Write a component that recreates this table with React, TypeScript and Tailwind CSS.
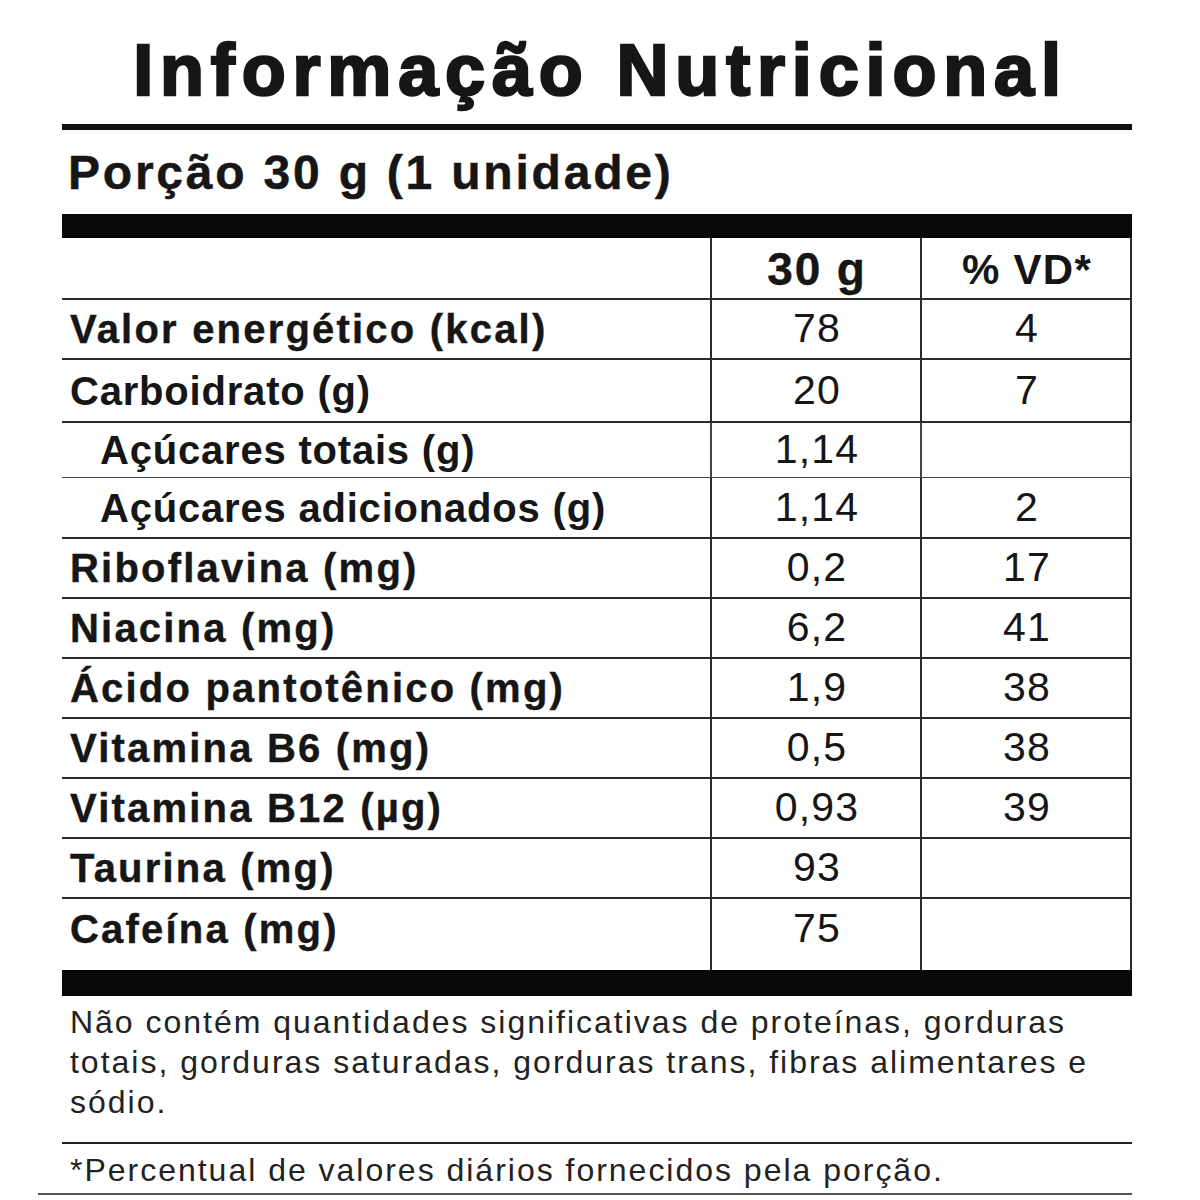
const ROWS = [
  { label: "Valor energético (kcal)", qty: "78", vd: "4", h: 60 },
  { label: "Carboidrato (g)", qty: "20", vd: "7", h: 63, light: true },
  { label: "Açúcares totais (g)", qty: "1,14", vd: "", h: 55, indent: true, thin: true, light: true },
  { label: "Açúcares adicionados (g)", qty: "1,14", vd: "2", h: 61, indent: true, light: true },
  { label: "Riboflavina (mg)", qty: "0,2", vd: "17", h: 60 },
  { label: "Niacina (mg)", qty: "6,2", vd: "41", h: 60 },
  { label: "Ácido pantotênico (mg)", qty: "1,9", vd: "38", h: 60 },
  { label: "Vitamina B6 (mg)", qty: "0,5", vd: "38", h: 60 },
  { label: "Vitamina B12 (µg)", qty: "0,93", vd: "39", h: 60 },
  { label: "Taurina (mg)", qty: "93", vd: "", h: 60 },
  { label: "Cafeína (mg)", qty: "75", vd: "", h: 71, last: true },
];

export default function App() {
  return (
    <div className="w-[1200px] h-[1200px] bg-white text-[#161616] font-['Liberation_Sans',Arial,sans-serif] overflow-hidden">
      <div className="ml-[62px] w-[1070px] pt-[30px]">
        <h1 className="text-center pl-[7px] text-[72px] leading-[80px] font-bold tracking-[0.095em] [-webkit-text-stroke:2.5px_#161616]">
          Informação Nutricional
        </h1>
        <div className="mt-[14px] h-[6px] bg-[#111]" />
        <div className="pl-[6px] pt-[15px] pb-[13px] text-[48px] leading-[56px] font-bold tracking-[0.058em] [-webkit-text-stroke:0.5px_#161616]">
          Porção 30 g (1 unidade)
        </div>
        <div className="h-[24px] bg-[#080808]" />

        <div className="grid grid-cols-[648px_210px_212px]">
          <div className="h-[62px] border-b-2 border-[#2a2a2a]" />
          <div className="h-[62px] border-b-2 border-l-2 border-[#2a2a2a] flex items-center justify-center pt-[2px] pl-[2px] text-[46px] font-bold tracking-[0.04em] [-webkit-text-stroke:0.4px_#161616]">
            30 g
          </div>
          <div className="h-[62px] border-b-2 border-l-2 border-r-2 border-[#2a2a2a] flex items-center justify-center pt-[2px] pl-[2px] text-[42px] font-bold tracking-[0.03em]">
            % VD*
          </div>

          {ROWS.map((r) => {
            const line = r.last ? "pb-[11px]" : r.thin ? "border-b border-[#444]" : "border-b-2 border-[#2a2a2a]";
            const weight = r.light
              ? "tracking-[0.02em]"
              : "tracking-[0.055em] [-webkit-text-stroke:0.4px_#161616]";
            return (
              <div key={r.label} className="contents">
                <div
                  className={`flex items-center text-[40px] font-bold ${weight} ${r.indent ? "pl-[38px]" : "pl-[8px]"} ${line}`}
                  style={{ height: r.h }}
                >
                  {r.label}
                </div>
                <div
                  className={`flex items-center justify-center pl-[2px] text-[41px] tracking-[0.03em] border-l-2 border-[#2a2a2a] ${line}`}
                  style={{ height: r.h }}
                >
                  {r.qty}
                </div>
                <div
                  className={`flex items-center justify-center pl-[2px] text-[41px] tracking-[0.03em] border-l-2 border-r-2 border-[#2a2a2a] ${line}`}
                  style={{ height: r.h }}
                >
                  {r.vd}
                </div>
              </div>
            );
          })}
        </div>

        <div className="h-[26px] bg-[#080808]" />
        <p className="pl-[8px] pt-[6px] pb-[20px] text-[32px] leading-[40px] tracking-[0.062em] text-[#222] whitespace-nowrap">
          Não contém quantidades significativas de proteínas, gorduras
          <br />
          totais, gorduras saturadas, gorduras trans, fibras alimentares e
          <br />
          sódio.
        </p>
        <div className="h-[2px] bg-[#222]" />
        <p className="pl-[8px] pt-[6px] text-[32px] leading-[40px] tracking-[0.062em] text-[#222] whitespace-nowrap">
          *Percentual de valores diários fornecidos pela porção.
        </p>
      </div>
      <div className="ml-[38px] mt-[3px] w-[1094px] h-[2px] bg-[#555]" />
    </div>
  );
}
